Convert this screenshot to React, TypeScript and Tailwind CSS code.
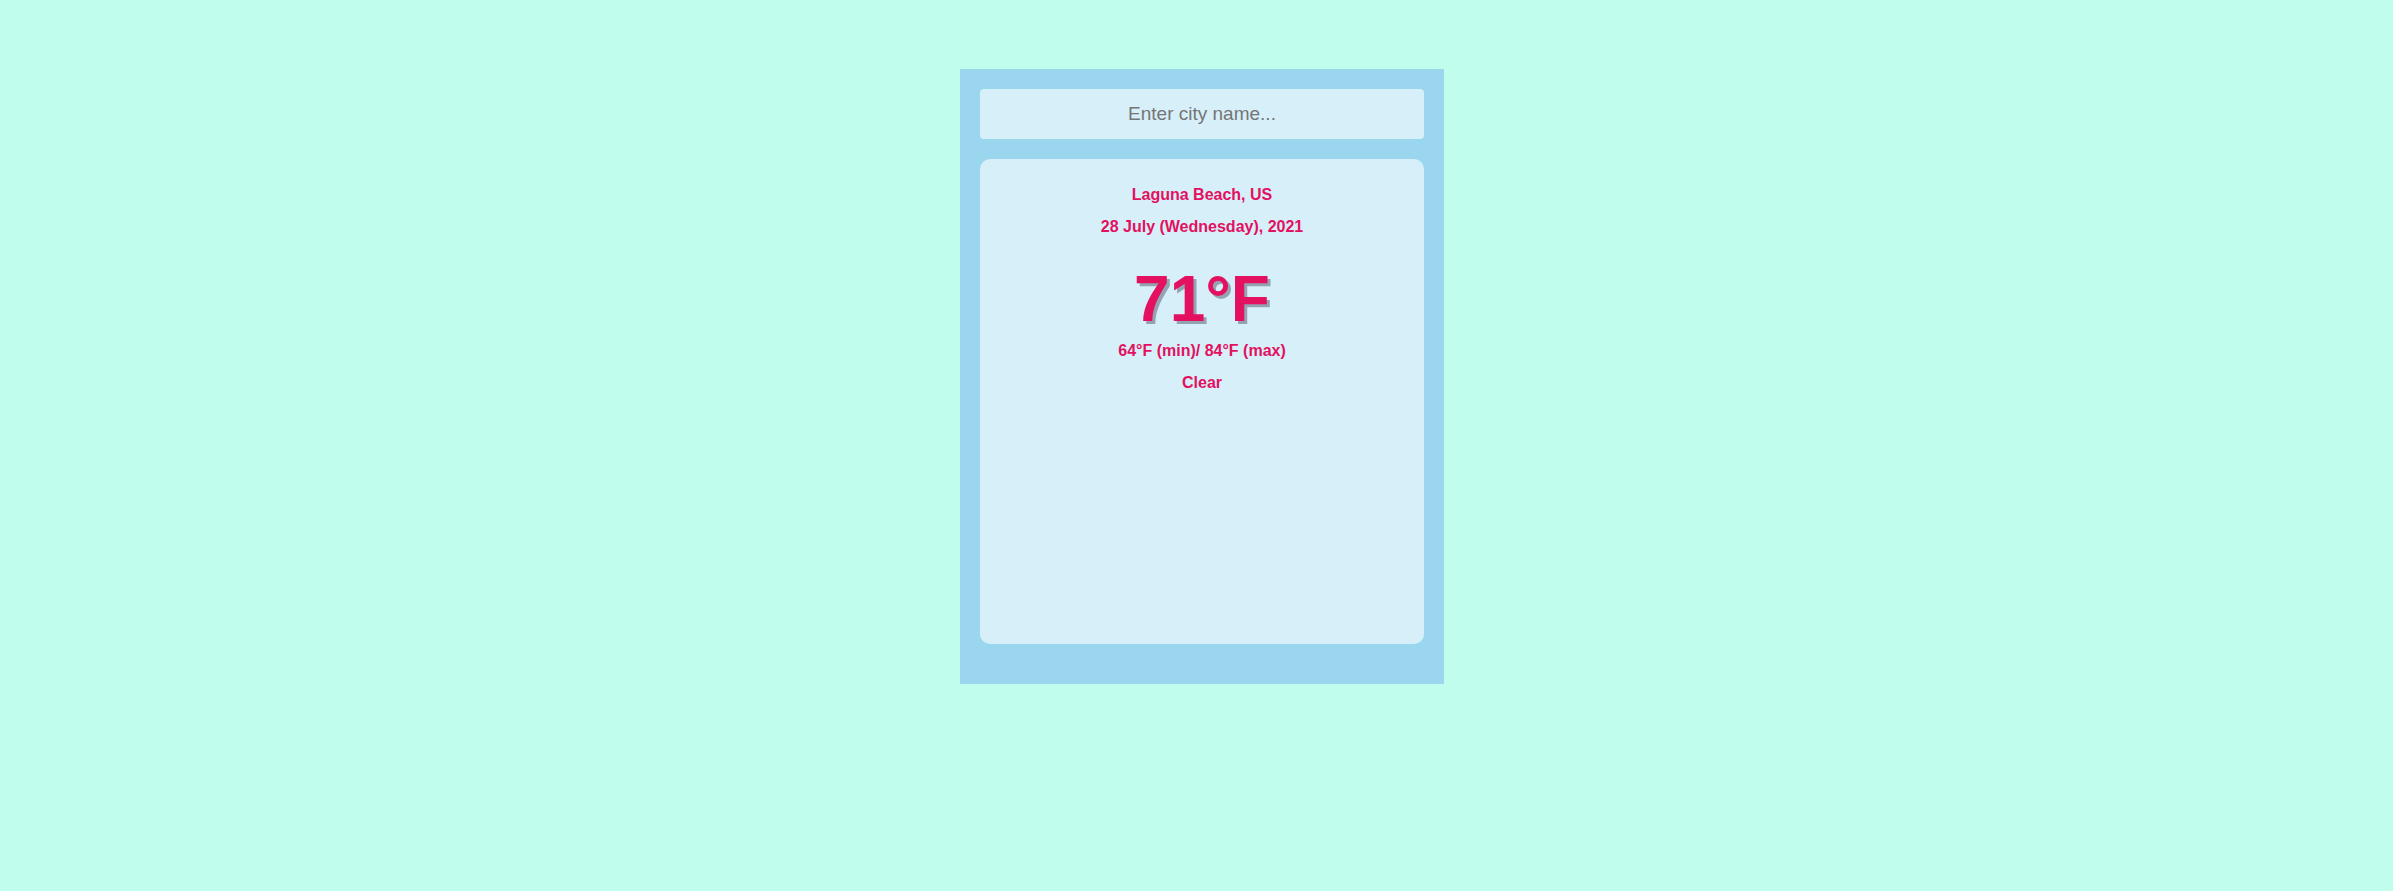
import { useState } from 'react';

export default function App() {
  const [query, setQuery] = useState('');

  return (
    <div className="min-h-screen bg-[#c1fdec] pt-[69px] pl-[11px] flex justify-center font-['Liberation_Sans',Arial,sans-serif]">
      <main className="w-[484px] h-[615px] bg-[#9ad7ef] p-5 flex flex-col">
        <input
          type="text"
          value={query}
          onChange={(e) => setQuery(e.target.value)}
          placeholder="Enter city name..."
          className="w-full h-[50px] rounded-[4px] bg-[#d6eff9] text-center text-[19px] text-[#313131] placeholder:text-[#757575] outline-none"
        />

        <div className="mt-5 h-[485px] rounded-[10px] bg-[#d6eff9] pt-5 text-center text-[#e3115f] font-bold">
          <div className="text-base leading-8">Laguna Beach, US</div>
          <div className="text-base leading-8">28 July (Wednesday), 2021</div>
          <div className="mt-5 text-[64px] leading-[72px] [text-shadow:3px_3px_rgba(50,50,70,0.4)]">71°F</div>
          <div className="text-base leading-8">64°F (min)/ 84°F (max)</div>
          <div className="text-base leading-8">Clear</div>
        </div>
      </main>
    </div>
  );
}
